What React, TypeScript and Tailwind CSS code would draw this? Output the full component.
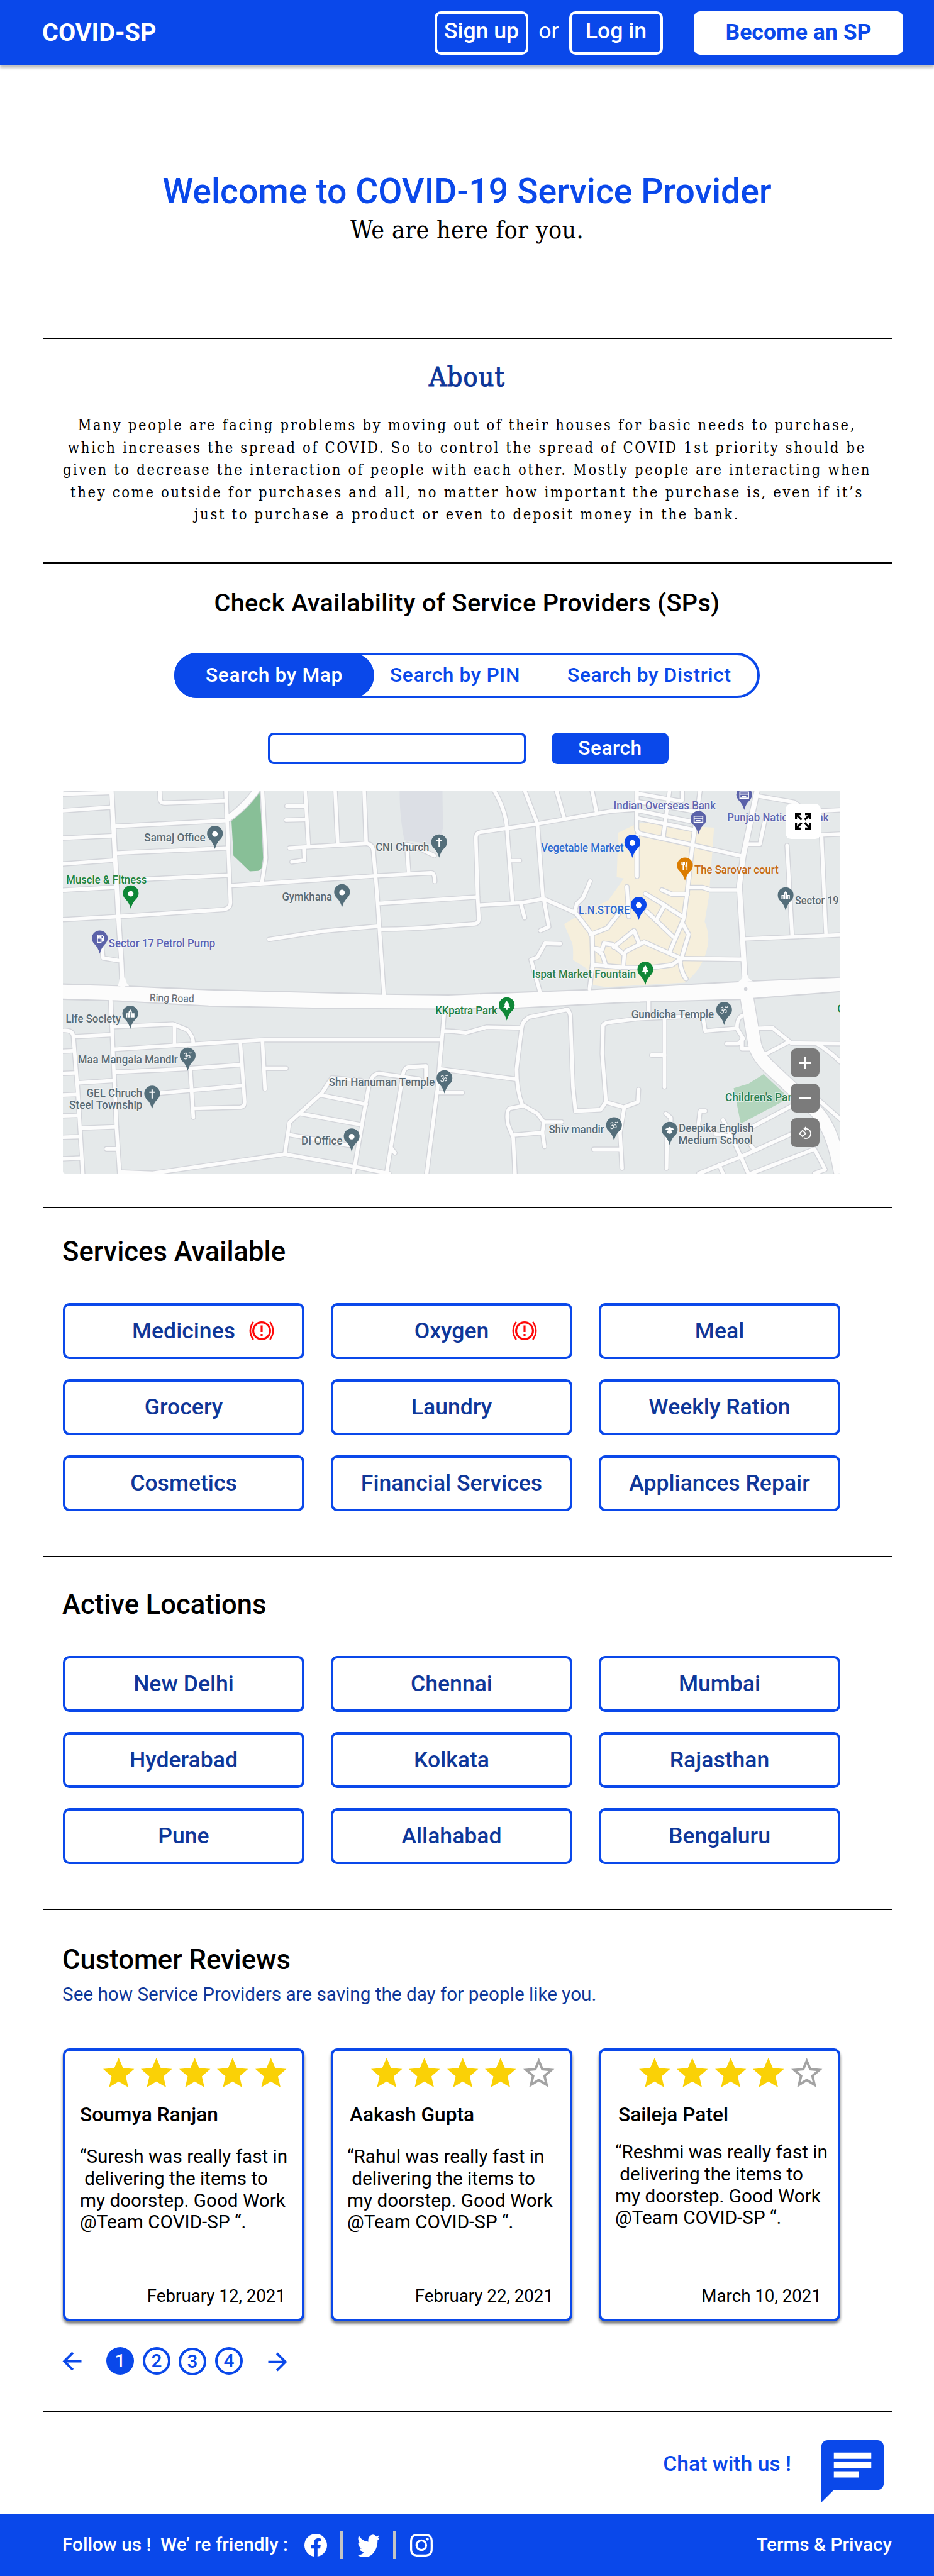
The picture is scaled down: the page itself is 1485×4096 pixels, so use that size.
import React from "react";
import {
  MdArrowBack,
  MdArrowForward,
  MdChat,
  MdRotate90DegreesCcw,
  MdStar,
  MdStarBorder,
} from "react-icons/md";
import { BsFacebook, BsInstagram, BsTwitter } from "react-icons/bs";

const SERVICES = [
  { name: "Medicines", alert: "left-[292px]" },
  { name: "Oxygen", alert: "left-[284px]" },
  { name: "Meal" },
  { name: "Grocery" },
  { name: "Laundry" },
  { name: "Weekly Ration" },
  { name: "Cosmetics" },
  { name: "Financial Services" },
  { name: "Appliances Repair" },
];

const LOCATIONS = [
  { name: "New Delhi" },
  { name: "Chennai" },
  { name: "Mumbai" },
  { name: "Hyderabad" },
  { name: "Kolkata" },
  { name: "Rajasthan" },
  { name: "Pune" },
  { name: "Allahabad" },
  { name: "Bengaluru" },
];

const REVIEWS = [
  { who: "Soumya Ranjan", helper: "Suresh", date: "February 12, 2021", stars: 5, nameX: "pl-[23px]", quote: "pl-[23px] mt-[30px]" },
  { who: "Aakash Gupta", helper: "Rahul", date: "February 22, 2021", stars: 4, nameX: "pl-[26px]", quote: "pl-[22px] mt-[30px]" },
  { who: "Saileja Patel", helper: "Reshmi", date: "March 10, 2021", stars: 4, nameX: "pl-[27px]", quote: "pl-[22px] mt-[23px]" },
];

const WEST_ROADS = [
  "M27 38L215 32", "M27 103L215 90", "M27 211L222 202", "M27 313L228 298", "M27 416L235 404",
  "M27 532L245 520L660 492Q685 488 686 465L668 24",
  "M228 165L672 142", "M235 270L675 250", "M240 378L680 357",
  "M408 24L410 60Q412 74 430 73L665 65",
  "M812 24L825 290L810 385",
  "M695 398L1255 360L1475 348Q1490 348 1490 382",
  "M908 85H980", "M905 140L985 138", "M980 24L993 240", "M1098 24L1108 235",
  "M918 250L1220 232Q1245 235 1248 260L1262 420L1290 830", "M1212 24L1220 232",
  "M975 250L977 298L928 305", "M1380 240L1387 345", "M1380 236L1430 252L1488 280",
  "M1275 468L1658 443", "M1275 570Q1400 570 1545 556L1640 549",
  "M838 610L1050 577L1265 558", "M180 640L185 683L245 693",
  "M215 850L238 1350L250 1531", "M27 968Q65 965 68 990L85 1200L105 1531",
  "M78 992L215 985", "M27 1050L65 1048", "M27 1137L75 1135", "M27 1222L80 1220",
  "M27 1304L85 1302", "M27 1388L90 1386", "M27 1473L95 1470",
  "M90 1174L228 1165", "M100 1352L238 1347", "M198 1434H240",
  "M228 953L460 943L515 965Q540 990 540 1020", "M466 945V1025",
  "M230 1042L700 1012L820 1005H1515", "M238 1132L520 1118L725 1103",
  "M725 1015L742 1250Q742 1268 725 1270L540 1275", "M528 1120L540 1310", "M405 1215L735 1185",
  "M812 1010L822 1198", "M822 1117H905",
  "M250 1525L380 1530L900 1455L1180 1505L1310 1531",
  "M900 1455L918 1330L1045 1215L1085 1155L1200 1165", "M1040 1222L1220 1258",
  "M960 1295L1205 1340", "M918 1378L1150 1420",
  "M1170 1531L1210 1300L1230 1190Q1240 1140 1270 1137L1430 1160",
  "M1300 1531L1365 1140Q1370 1113 1390 1112L1455 1108V1160", "M1318 1430L1333 1450",
  "M1528 890L1500 1200L1458 1531", "M1530 970L1568 972L1613 977L1693 955L1828 958",
  "M1515 1120L1810 1160", "M1500 1213H1598",
];

const EAST_ROADS = [
  "M180 24Q225 100 230 170L252 460", "M300 24L350 155L372 450", "M425 24L455 130", "M565 24L583 110",
  "M115 443L108 210Q108 188 130 187L350 155L640 105L735 98",
  "M115 443L120 530Q118 548 100 549",
  "M120 475L290 465L375 450L500 505L565 590L568 700L555 805",
  "M250 300H280", "M285 470L300 525", "M375 450L395 560L362 575",
  "M495 505L505 470L530 445L558 380", "M440 627L380 625L350 680L325 690L360 815",
  "M742 24L740 170Q740 190 760 195L960 238L1160 283",
  "M745 36L915 66", "M745 68L980 108", "M742 102L965 148", "M742 132L965 178",
  "M870 24L845 205", "M920 24V62", "M990 24L960 240L940 420L925 530L870 660",
  "M742 200V362", "M702 402L710 520", "M840 415L880 432L940 432", "M775 430L850 475L920 520",
  "M850 475L820 530", "M780 500L885 600", "M668 510L625 565L560 590",
  "M920 545L945 590L915 690", "M915 685L770 620L700 655L690 668L645 630L612 625L605 650L575 645L605 668L620 715",
  "M650 640L730 575L750 625", "M692 668L688 718", "M570 710L688 720L790 722L880 710L915 685",
  "M910 690Q915 740 935 765", "M945 405L1000 405L1030 415L1140 415", "M915 685L1160 688",
  "M1215 45L1360 70L1400 100", "M1180 235L1225 235L1245 140", "M1440 200L1545 195", "M1460 104L1545 100",
  "M1332 240L1352 590", "M1468 205L1485 585", "M1165 608L1545 592",
  "M470 885L320 915Q290 930 288 960L268 1120Q268 1200 290 1260L350 1295L375 1328H445",
  "M462 885Q480 890 480 920L490 1190L500 1285L598 1280L620 1250L690 1270L745 1250L748 1200",
  "M620 1250L605 1060L608 950Q610 938 640 935L740 922L1000 910L1010 970L1130 960",
  "M788 850V895", "M850 915V1190", "M800 1065H850",
  "M290 1265L240 1275Q225 1290 235 1340L255 1390L262 1531", "M255 1380L370 1370L378 1425", "M375 1328L370 1370",
  "M692 1270L675 1370L683 1510", "M572 1436H672", "M860 1380L858 1510", "M855 1295L875 1312V1340",
  "M983 1340L990 1285L1010 1285",
  "M1155 910Q1135 920 1135 960L1160 1000L1140 1020H1095", "M1155 1000V1040H1185",
  "M1215 960L1275 958L1350 1018L1545 1020", "M1240 1065L1335 1015", "M1450 1020Q1500 1050 1545 1095",
  "M985 1531L1150 1465L1350 1375", "M1200 1345L1350 1265", "M1080 1320L1130 1420L1180 1531",
  "M1190 1531L1440 1435L1482 1515L1440 1531", "M1455 1240L1545 1320", "M1065 1498L1080 1531",
  "M1050 1375L1120 1385", "M1190 1420L1205 1440",
];

const WIDE_ROADS = [
  { d: "M218 24L245 520L257 700L262 810", w: 17 },
  { d: "M680 132Q750 80 790 20", w: 24 },
  { d: "M2758 24L2703 283L2688 400L2711 780", w: 20 },
  { d: "M2716 830L2746 1010Q2752 1060 2803 1110L2985 1280Q3055 1350 3084 1520", w: 50 },
];

const SLATE = "#546e7a";
const GREEN = "#0f8737";
const INDIGO = "#5b62a9";
const BLUE = "#0a48ea";
const ORANGE = "#db7c00";

type Glyph = "dot" | "cross" | "om" | "tree" | "card" | "fork" | "pump" | "people" | "cap";

const PINS: [number, number, string, Glyph][] = [
  [625, 195, SLATE, "dot"], [1507, 229, SLATE, "cross"], [294, 430, GREEN, "dot"],
  [1125, 425, SLATE, "dot"], [172, 607, INDIGO, "pump"], [292, 903, SLATE, "people"],
  [518, 1068, SLATE, "om"], [378, 1218, SLATE, "cross"], [1528, 1157, SLATE, "om"],
  [1163, 1386, SLATE, "dot"], [2527, 137, INDIGO, "card"], [2707, 42, INDIGO, "card"],
  [2267, 230, BLUE, "dot"], [2474, 320, ORANGE, "fork"], [2870, 437, SLATE, "people"],
  [2292, 475, BLUE, "dot"], [2318, 730, GREEN, "tree"], [1773, 870, GREEN, "tree"],
  [2628, 888, SLATE, "om"], [2195, 1342, SLATE, "om"], [2414, 1360, SLATE, "cap"],
];

const LABELS: [string, number, number, number, string][] = [
  ["Samaj Office", 347, 241, 225, "#5a6b75"], ["CNI Church", 1257, 211, 262, "#5a6b75"],
  ["Muscle & Fitness", 40, 317, 391, "#1c8440"], ["Gymkhana", 889, 197, 458, "#5a6b75"],
  ["Sector 17 Petrol Pump", 207, 419, 640, "#5b62b5"],
  ["Life Society", 38, 217, 936, "#5a6b75"], ["Maa Mangala Mandir", 86, 393, 1098, "#5a6b75"],
  ["GEL Chruch", 120, 219, 1228, "#5a6b75"], ["Steel Township", 52, 288, 1275, "#5a6b75"],
  ["Shri Hanuman Temple", 1073, 417, 1188, "#5a6b75"], ["DI Office", 965, 162, 1416, "#5a6b75"],
  ["KKpatra Park", 1492, 244, 904, "#1c7f3f"], ["Indian Overseas Bank", 2193, 402, 98, "#5f66b3"],
  ["Punjab National Bank", 2640, 399, 146, "#5f66b3"], ["Vegetable Market", 1908, 325, 264, "#2e6cd0"],
  ["The Sarovar court", 2511, 331, 351, "#c56a14"], ["L.N.STORE", 2056, 201, 509, "#2e6cd0"],
  ["Sector 19", 2907, 172, 471, "#5a6b75"], ["Ispat Market Fountain", 1873, 408, 762, "#2b7f4a"],
  ["Gundicha Temple", 2263, 325, 920, "#5a6b75"], ["Children's Park", 2632, 284, 1246, "#2b8050"],
  ["Deepika English", 2450, 294, 1368, "#5a6b75"], ["Medium School", 2448, 293, 1415, "#5a6b75"],
  ["Shiv mandir", 1938, 218, 1372, "#5a6b75"], ["G", 3073, 28, 898, "#1c7f3f"],
];

function PinGlyph({ kind }: { kind: Glyph }) {
  switch (kind) {
    case "dot":
      return <circle r="11" fill="#fff" />;
    case "cross":
      return <path d="M0-18V18M-11-7H11" stroke="#fff" strokeWidth="5" />;
    case "om":
      return <path d="M-14-8Q-4-16-4-6Q-4 0-10 0Q0 0-3 9Q-9 16-15 8M-3 2Q6-8 9 2Q10 12 2 8M4-13Q10-8 14-14" stroke="#fff" strokeWidth="3.5" fill="none" opacity=".85" />;
    case "tree":
      return <path d="M0-19L11-3H7L14 9H3V17H-3V9H-14L-7-3H-11Z" fill="#fff" />;
    case "card":
      return <path d="M-17-12H17V12H-17ZM-17-4H17M-9 5H8" stroke="#fff" strokeWidth="4" fill="none" />;
    case "fork":
      return <path d="M-7 17V-2M-12-15V-5H-2V-15M-7-15V-4M8 17V-14Q3-8 3 1H8" stroke="#fff" strokeWidth="4" fill="none" />;
    case "pump":
      return <path d="M-9 15V-14H5V15ZM-5-9H1V-2H-5ZM5-2H10V10Q15 12 14 2V-9L8-13" stroke="#fff" strokeWidth="4" fill="none" />;
    case "people":
      return <path d="M-14 14V0H-7V14M-4 14V-8L0-14L4-8V14M7 14V0H14V14" stroke="#fff" strokeWidth="5" fill="none" />;
    default:
      return <path d="M-18-4L0-13L18-4L0 5ZM-10 4V11Q0 18 10 11V4" fill="#fff" />;
  }
}

function CityMap() {
  return (
    <svg viewBox="27 24 3058 1507" preserveAspectRatio="none" className="block h-full w-full">
      <rect x="27" y="24" width="3058" height="1507" fill="#e5e9ea" />
      <path d="M800 26L740 95L690 140L698 280L762 342L795 340Q812 335 820 300Z" fill="#88bf97" />
      <path d="M1352 24H1520L1522 170L1508 240L1370 220Q1350 120 1352 24Z" fill="#dcdfe5" />
      <path
        transform="translate(1543.5 0)"
        d="M668 190L750 150L1045 170L1025 440L1008 540Q1025 580 1022 620Q1010 720 930 780L620 797L570 790L545 725L490 690Q492 640 487 625L455 550L520 510L630 455L690 370L662 365Z"
        fill="#f6efdc"
      />
      <path transform="translate(1543.5 0)" d="M1122 1195L1180 1178L1240 1140L1320 1215L1310 1250L1150 1335Z" fill="#b3d5bd" />

      <g fill="none" stroke="#d3d5da" strokeLinecap="round" strokeLinejoin="round" strokeWidth="21">
        {WEST_ROADS.map((d) => <path key={d} d={d} />)}
        <g transform="translate(1543.5 0)">{EAST_ROADS.map((d) => <path key={d} d={d} />)}</g>
        {WIDE_ROADS.map((r) => <path key={r.d} d={r.d} strokeWidth={r.w + 7} />)}
      </g>
      <path
        d="M20 785L240 792L600 808L1290 825L1543 828L2093 808L2683 776L3090 758V815L2693 846L2243 858L1813 880L1543 884L1100 882L600 872L240 852L20 845Z"
        fill="#fcfcfc" stroke="#d3d5da" strokeWidth="5"
      />
      <g fill="none" stroke="#fcfcfc" strokeLinecap="round" strokeLinejoin="round" strokeWidth="14">
        {WEST_ROADS.map((d) => <path key={d} d={d} />)}
        <g transform="translate(1543.5 0)">{EAST_ROADS.map((d) => <path key={d} d={d} />)}</g>
        {WIDE_ROADS.map((r) => <path key={r.d} d={r.d} strokeWidth={r.w} />)}
      </g>
      <path d="M243 794Q248 780 250 760H272Q276 785 288 794ZM2683 777Q2700 768 2702 750H2720Q2724 768 2742 775Z" fill="#fcfcfc" />
      <circle cx="2713" cy="805" r="7" fill="#d3d5da" />

      <g fontFamily="Roboto, sans-serif" fontSize="45" fontWeight="500" paintOrder="stroke" stroke="#f4f6f7" strokeWidth="5" strokeOpacity=".7">
        {LABELS.map(([text, x, w, y, fill]) => (
          <text key={text} x={x} y={y} textLength={w} lengthAdjust="spacingAndGlyphs" fill={fill}>
            {text}
          </text>
        ))}
        <text x="368" y="853" textLength="175" lengthAdjust="spacingAndGlyphs" fill="#686d72" fontSize="41" fontWeight="400" transform="rotate(1.5 368 853)">
          Ring Road
        </text>
      </g>

      {PINS.map(([x, y, color, kind]) => (
        <g key={`${x}-${y}`} transform={`translate(${x} ${y})`}>
          <path d="M0 59Q-6 36-20 22A31 31 0 1 1 20 22Q6 36 0 59Z" fill={color} />
          <PinGlyph kind={kind} />
        </g>
      ))}
    </svg>
  );
}

function AlertIcon() {
  return (
    <svg viewBox="0 0 40 32" className="h-8 w-10" fill="none" stroke="#ff0a0a">
      <circle cx="20" cy="16" r="13.4" strokeWidth="3.2" />
      <path d="M20 7.5V18M20 21V24.5" strokeWidth="3.2" />
      <path d="M6.8 2Q-3 16 6.8 30M33.2 2Q43 16 33.2 30" strokeWidth="2.6" />
    </svg>
  );
}

function Divider({ className }: { className: string }) {
  return <div className={`mx-[68px] mr-[67px] h-[2px] bg-black ${className}`} />;
}

function TileGrid({ items, className }: { items: { name: string; alert?: string }[]; className: string }) {
  return (
    <div className={`ml-[100px] grid w-[1236px] grid-cols-3 gap-x-[42px] gap-y-8 ${className}`}>
      {items.map((item) => (
        <button
          key={item.name}
          className="relative flex h-[89px] items-center justify-center rounded-[10px] border-4 border-[#0a48ea] text-[35.6px] font-medium text-[#0f3799]"
        >
          {item.name}
          {item.alert && (
            <span className={`absolute top-[24px] ${item.alert}`}>
              <AlertIcon />
            </span>
          )}
        </button>
      ))}
    </div>
  );
}

function MapButton({ children }: { children: React.ReactNode }) {
  return (
    <button className="flex h-[46px] w-[46px] items-center justify-center rounded-[9px] bg-[#7b7b7b] text-white">
      {children}
    </button>
  );
}

export default function App() {
  return (
    <div className="h-[4096px] w-[1485px] overflow-hidden bg-white font-[Roboto,sans-serif] text-black">
      <header className="flex h-[104px] items-center bg-[#0a48ea] pr-[49px] pl-[67px] text-[35.6px] text-white shadow-[0_4px_4px_rgba(0,0,0,0.25)]">
        <div className="w-[624px] text-[39.6px] font-bold">COVID-SP</div>
        <button className="h-[69px] w-[149px] rounded-[10px] border-4 border-white pb-1 font-medium whitespace-nowrap">Sign up</button>
        <div className="w-[65px] pb-1 text-center">or</div>
        <button className="h-[69px] w-[149px] rounded-[10px] border-4 border-white pb-1 font-medium">Log in</button>
        <button className="ml-auto h-[69px] w-[333px] rounded-[10px] bg-white font-bold text-[#0a48ea]">Become an SP</button>
      </header>

      <section className="text-center">
        <h1 className="mt-[168px] h-[66px] text-[55.4px] leading-[66px] font-medium text-[#0a48ea]">
          Welcome to COVID-19 Service Provider
        </h1>
        <p className="mt-[3px] h-[50px] font-['Roboto_Slab','DejaVu_Serif_Condensed','DejaVu_Serif',serif] text-[39px] leading-[50px] tracking-[0.4px]">
          We are here for you.
        </p>
      </section>

      <Divider className="mt-[146px]" />

      <section className="text-center font-['Roboto_Slab','DejaVu_Serif_Condensed','DejaVu_Serif',serif]">
        <h2 className="mt-[36px] h-[50px] text-[42.5px] leading-[50px] font-medium tracking-[1.2px] text-[#0f3799] [-webkit-text-stroke:1.2px_#0f3799]">About</h2>
        <p className="mt-[34px] h-[178px] text-[23.5px] leading-[35.6px] tracking-[2.7px] whitespace-nowrap">
          Many people are facing problems by moving out of their houses for basic needs to purchase,
          <br />
          which increases the spread of COVID. So to control the spread of COVID 1st priority should be
          <br />
          given to decrease the interaction of people with each other. Mostly people are interacting when
          <br />
          they come outside for purchases and all, no matter how important the purchase is, even if it’s
          <br />
          just to purchase a product or even to deposit money in the bank.
        </p>
      </section>

      <Divider className="mt-[57px]" />

      <section>
        <h2 className="mt-[39px] h-[48px] text-center text-[39.6px] leading-[48px] font-medium tracking-[0.42px]">
          Check Availability of Service Providers (SPs)
        </h2>
        <div className="mt-[55px] ml-[277px] flex h-[72px] w-[931px] items-center rounded-full border-4 border-[#0a48ea] text-[31.7px] font-medium tracking-[0.63px] text-[#0a48ea]">
          <button className="-ml-1 h-[72px] w-[318px] rounded-full bg-[#0a48ea] text-white">Search by Map</button>
          <button className="ml-[25px] whitespace-nowrap">Search by PIN</button>
          <button className="ml-[75px] whitespace-nowrap">Search by District</button>
        </div>
        <div className="mt-[55px] ml-[426px] flex h-[50px] gap-[40px]">
          <input className="w-[411px] rounded-[9px] border-4 border-[#0a48ea] px-3" />
          <button className="w-[186px] rounded-[9px] bg-[#0a48ea] text-[31.7px] leading-[46px] font-medium tracking-[0.5px] text-white">Search</button>
        </div>
        <div className="relative mt-[42px] ml-[100px] h-[609px] w-[1236px] overflow-hidden rounded">
          <CityMap />
          <button className="absolute top-[21px] left-[1149px] flex h-14 w-14 items-center justify-center rounded-[9px] bg-white">
            <svg viewBox="0 0 26 26" className="h-[26px] w-[26px]" fill="none" stroke="#000" strokeWidth="3.2">
              <path d="M1.6 10V1.6H10M16 1.6H24.4V10M24.4 16V24.4H16M10 24.4H1.6V16M2 2L10.5 10.5M24 2L15.5 10.5M24 24L15.5 15.5M2 24L10.5 15.5" />
            </svg>
          </button>
          <div className="absolute top-[410px] left-[1157px] flex flex-col gap-[9.5px]">
            <MapButton>
              <svg viewBox="0 0 18 18" className="h-[18px] w-[18px]" stroke="currentColor" strokeWidth="4">
                <path d="M9 0V18M0 9H18" />
              </svg>
            </MapButton>
            <MapButton>
              <svg viewBox="0 0 18 18" className="h-[18px] w-[18px]" stroke="currentColor" strokeWidth="4">
                <path d="M0 9H18" />
              </svg>
            </MapButton>
            <MapButton>
              <MdRotate90DegreesCcw size={23} />
            </MapButton>
          </div>
        </div>
      </section>

      <Divider className="mt-[53px]" />

      <h2 className="mt-[45px] ml-[99px] h-[50px] text-[43.6px] leading-[50px] font-medium">Services Available</h2>
      <TileGrid items={SERVICES} className="mt-[56px]" />

      <Divider className="mt-[71px]" />

      <h2 className="mt-[51px] ml-[99px] h-[50px] text-[43.6px] leading-[50px] font-medium">Active Locations</h2>
      <TileGrid items={LOCATIONS} className="mt-[56px]" />

      <Divider className="mt-[71px]" />

      <section>
        <h2 className="mt-[55px] ml-[99px] h-[50px] text-[43.6px] leading-[50px] font-medium">Customer Reviews</h2>
        <p className="mt-[11px] ml-[99px] h-[36px] text-[29.7px] leading-[36px] text-[#0f3799]">
          See how Service Providers are saving the day for people like you.
        </p>
        <div className="mt-[68px] ml-[100px] grid w-[1236px] grid-cols-3 gap-x-[42px]">
          {REVIEWS.map((r) => (
            <article
              key={r.who}
              className="flex h-[434px] flex-col rounded-[10px] border-4 border-[#0a48ea] bg-white pt-[6px] pb-[19px] shadow-[0_4px_4px_rgba(0,0,0,0.5)]"
            >
              <div className="flex h-[60px] justify-end gap-[1px] pr-[20px]">
                {[0, 1, 2, 3, 4].map((i) =>
                  i < r.stars ? (
                    <MdStar key={i} size={59.4} color="#fad106" />
                  ) : (
                    <MdStarBorder key={i} size={59.4} color="#a3a3a3" />
                  ),
                )}
              </div>
              <h3 className={`mt-[17px] h-[38px] text-[31.7px] leading-[38px] font-medium ${r.nameX}`}>{r.who}</h3>
              <p className={`text-[29.7px] leading-[34.8px] whitespace-pre ${r.quote}`}>
                {`“${r.helper} was really fast in\n delivering the items to\nmy doorstep. Good Work\n@Team COVID-SP “.`}
              </p>
              <time className="mt-auto h-[34px] pr-[26px] text-right text-[27.7px] leading-[34px]">{r.date}</time>
            </article>
          ))}
        </div>
        <nav className="mt-[41px] ml-[92px] flex h-[44px] items-center text-[29.7px] font-medium text-[#0a48ea]">
          <MdArrowBack size={45} />
          <button className="ml-[32px] h-[44px] w-[44px] rounded-full bg-[#0a48ea] leading-[44px] text-white">1</button>
          <button className="ml-[14px] h-[44px] w-[44px] rounded-full border-4 border-[#0a48ea] leading-[36px]">2</button>
          <button className="mt-[2px] ml-[13px] h-[44px] w-[44px] rounded-full border-4 border-[#0a48ea] leading-[36px]">3</button>
          <button className="ml-[14px] h-[44px] w-[44px] rounded-full border-4 border-[#0a48ea] leading-[36px]">4</button>
          <MdArrowForward size={45} className="mt-[2px] ml-[33px]" />
        </nav>
      </section>

      <Divider className="mt-[58px]" />

      <div className="mt-[34px] flex h-[119px] justify-end pr-[70px] text-[#0a48ea]">
        <span className="mt-[29px] mr-[38px] text-[33.7px] leading-[38px] font-medium">Chat with us !</span>
        <MdChat size={119} />
      </div>

      <footer className="mt-[8px] flex h-[99px] items-center bg-[#0a48ea] pr-[67px] pl-[99px] text-[29.7px] font-medium text-white">
        <span className="w-[385px] whitespace-pre">Follow us !  We’ re friendly :</span>
        <BsFacebook size={36} />
        <span className="ml-[21px] h-[44px] w-[5px] bg-[#c4c4c4]" />
        <BsTwitter size={36} viewBox="0 1.5 16 13" preserveAspectRatio="none" className="ml-[22px]" />
        <span className="ml-[21px] h-[44px] w-[5px] bg-[#c4c4c4]" />
        <BsInstagram size={36} className="ml-[22px]" />
        <span className="ml-auto">Terms &amp; Privacy</span>
      </footer>
    </div>
  );
}
